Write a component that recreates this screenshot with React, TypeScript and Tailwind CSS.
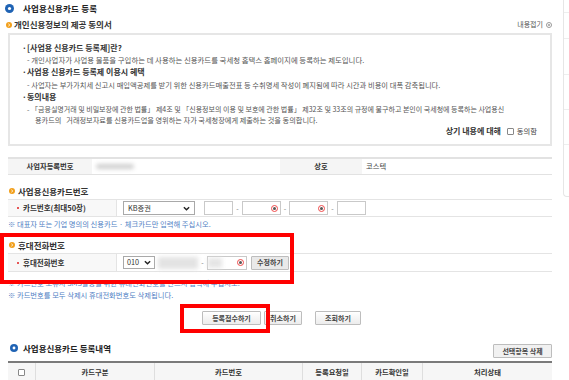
import React from 'react';

const BlueDot = ({ size = 9 }: { size?: number }) => (
  <svg width={size} height={size} viewBox="0 0 10 10" className="shrink-0">
    <circle cx="5" cy="5" r="5" fill="#1f63b4" />
    <circle cx="5" cy="5" r="1.8" fill="#ffffff" />
  </svg>
);

const OrangeDot = () => (
  <svg width="6" height="6" viewBox="0 0 10 10" className="shrink-0">
    <circle cx="5" cy="5" r="5" fill="#f2a01c" />
    <path d="M4 3 L6.2 5 L4 7" stroke="#fff" strokeWidth="1.6" fill="none" />
  </svg>
);

const Chevron = () => (
  <svg width="7" height="5" viewBox="0 0 8 5" className="shrink-0">
    <path d="M1 1 L4 4 L7 1" stroke="#222" strokeWidth="1.6" fill="none" />
  </svg>
);

const KeyIcon = () => (
  <span className="w-[7px] h-[7px] rounded-full border border-[#f04a4a] flex items-center justify-center shrink-0">
    <span className="w-[3px] h-[3px] rounded-full bg-[#555]" />
  </span>
);

const Input = ({ w, icon }: { w: string; icon?: boolean }) => (
  <div className={`${w} h-[14px] border border-[#c9c9c9] bg-white flex items-center justify-end pr-[2px]`}>
    {icon && <KeyIcon />}
  </div>
);

const Dash = ({ w }: { w: string }) => (
  <span className={`${w} text-center text-[7px] text-[#777]`}>-</span>
);

const SectionHead = ({ children }: { children: React.ReactNode }) => (
  <div className="h-[16px] flex items-center gap-[3px] pl-[1px]">
    <OrangeDot />
    <span className="text-[8.5px] font-bold text-[#333]">{children}</span>
  </div>
);

const Label = ({ children }: { children: React.ReactNode }) => (
  <div className="w-[109px] h-full bg-[#f8f8f8] border-r border-[#e4e4e4] flex items-center pl-[9px] gap-[4px]">
    <span className="w-[2px] h-[2px] bg-[#e02020] rounded-full" />
    <span className="text-[7.5px] font-bold text-[#333]">{children}</span>
  </div>
);

const Btn = ({ children, className }: { children: React.ReactNode; className: string }) => (
  <button className={`h-[14px] border border-[#bdbdbd] rounded-[1px] bg-gradient-to-b from-white to-[#ececec] text-[7px] font-bold text-[#444] flex items-center justify-center ${className}`}>
    {children}
  </button>
);

const App: React.FC = () => {
  return (
    <div className="w-[569px] h-[380px] overflow-hidden bg-white relative flex font-['Noto_Sans_CJK_KR',sans-serif] text-[#333]">
      <main className="w-[563px] shrink-0 pl-[5px] pr-[11px]">
        {/* Title */}
        <div className="h-[16px] flex items-center gap-[9px]">
          <BlueDot />
          <h1 className="text-[8.5px] font-bold tracking-[0.2px] text-[#222]">사업용신용카드 등록</h1>
        </div>

        {/* Consent heading */}
        <div className="h-[17px] flex items-center gap-[2px] pl-[1px]">
          <OrangeDot />
          <span className="text-[8.5px] font-bold text-[#333]">개인신용정보의 제공 동의서</span>
          <span className="ml-auto flex items-center gap-[3px] text-[7px] text-[#555]">
            내용접기
            <span className="w-[6px] h-[6px] rounded-full border border-[#999] flex items-center justify-center">
              <span className="w-[2px] h-[2px] bg-[#999] rounded-full" />
            </span>
          </span>
        </div>

        {/* Consent box */}
        <div className="ml-[3px] border-2 border-[#e6e6e6] pt-[7px] pb-[7px] whitespace-nowrap overflow-hidden">
          <div className="h-[12px] flex items-center pl-[12px] text-[8px] font-bold text-[#333]">
            <span className="w-[5px]">·</span>[사업용 신용카드 등록제]란?
          </div>
          <div className="h-[12px] flex items-center pl-[17px] text-[7.4px] text-[#555]">
            - 개인사업자가 사업용 물품을 구입하는 데 사용하는 신용카드를 국세청 홈택스 홈페이지에 등록하는 제도입니다.
          </div>
          <div className="h-[12px] flex items-center pl-[12px] text-[8px] font-bold text-[#333]">
            <span className="w-[5px]">·</span>사업용 신용카드 등록제 이용시 혜택
          </div>
          <div className="h-[12px] mt-[1px] flex items-center pl-[17px] text-[7.3px] text-[#555]">
            - 사업자는 부가가치세 신고시 매입액공제를 받기 위한 신용카드매출전표 등 수취명세 작성이 폐지됨에 따라 시간과 비용이 대폭 감축됩니다.
          </div>
          <div className="h-[12px] flex items-center pl-[12px] text-[8px] font-bold text-[#333]">
            <span className="w-[5px]">·</span>동의내용
          </div>
          <div className="h-[12px] flex items-center pl-[17px] text-[7px] text-[#555]">
            - 「금융실명거래 및 비밀보장에 관한 법률」 제4조 및 「신용정보의 이용 및 보호에 관한 법률」 제32조 및 33조의 규정에 불구하고 본인이 국세청에 등록하는 사업용신
          </div>
          <div className="h-[10px] flex items-center pl-[25px] text-[7.2px] text-[#555] whitespace-pre">
            용카드의   거래정보자료를 신용카드업을 영위하는 자가 국세청장에게 제출하는 것을 동의합니다.
          </div>
          <div className="h-[12px] flex items-center justify-end pr-[13px]">
            <span className="text-[8px] font-bold text-[#333]">상기 내용에 대해</span>
            <span className="ml-[6px] w-[7px] h-[7px] border border-[#888] rounded-[1px] bg-white" />
            <span className="ml-[3px] text-[7.3px] text-[#444]">동의함</span>
          </div>
        </div>

        <div className="ml-[3px]">
          {/* Business info row */}
          <div className="mt-[11px] h-[18px] flex border-t-2 border-b border-[#e2e2e2] text-[7.3px]">
            <div className="w-[84px] bg-[#f5f5f5] flex items-center justify-center font-bold text-[#333]">사업자등록번호</div>
            <div className="w-[188px] flex items-center pl-[4px]">
              <span className="w-[38px] h-[5px] bg-[#cfcfcf] blur-[2px] rounded-full" />
            </div>
            <div className="w-[82px] bg-[#f5f5f5] flex items-center justify-center font-bold text-[#333]">상호</div>
            <div className="flex-1 flex items-center pl-[4px] text-[#444]">코스텍</div>
          </div>

          {/* Card number */}
          <div className="mt-[8px]">
            <SectionHead>사업용신용카드번호</SectionHead>
          </div>
          <div className="h-[18px] flex border-t border-b border-[#e4e4e4]">
            <Label>카드번호(최대50장)</Label>
            <div className="flex items-center pl-[6px]">
              <div className="w-[72px] h-[14px] border border-[#a9a9a9] bg-white flex items-center justify-between px-[4px] text-[7.3px] text-[#333]">
                KB증권
                <Chevron />
              </div>
              <div className="ml-[9px]"><Input w="w-[29px]" /></div>
              <Dash w="w-[9px]" />
              <Input w="w-[39px]" icon />
              <Dash w="w-[8px]" />
              <Input w="w-[39px]" icon />
              <Dash w="w-[9px]" />
              <Input w="w-[29px]" />
            </div>
          </div>
          <div className="h-[15px] flex items-center text-[7.3px] text-[#4f80c4]">
            ※ 대표자 또는 기업 명의의 신용카드 · 체크카드만 입력해 주십시오.
          </div>

          {/* Mobile */}
          <div className="mt-[5px]">
            <SectionHead>휴대전화번호</SectionHead>
          </div>
          <div className="h-[19px] flex border-t border-b border-[#e4e4e4]">
            <Label>휴대전화번호</Label>
            <div className="flex items-center pl-[6px]">
              <div className="w-[32px] h-[13px] border border-[#a9a9a9] bg-white flex items-center justify-between px-[3px] text-[7.3px] text-[#333]">
                010
                <Chevron />
              </div>
              <span className="ml-[3px] w-[40px] h-[12px] bg-[#e3e3e3] blur-[2px]" />
              <Dash w="w-[9px]" />
              <div className="w-[40px] h-[14px] border border-[#c9c9c9] bg-white flex items-center justify-between pr-[2px]">
                <span className="w-[14px] h-[10px] bg-[#e5e5e5] blur-[2px]" />
                <KeyIcon />
              </div>
              <Btn className="ml-[4px] w-[38px] bg-none bg-[#e9e9e9]">수정하기</Btn>
            </div>
          </div>
          <div className="mt-[5px] h-[12px] flex items-center text-[7.3px] text-[#4f80c4]">
            ※ 카드번호 오류시 SMS발송을 위한 휴대전화번호를 반드시 입력해 주십시오.
          </div>
          <div className="h-[12px] flex items-center text-[7.3px] text-[#4f80c4]">
            ※ 카드번호를 모두 삭제시 휴대전화번호도 삭제됩니다.
          </div>

          {/* Action buttons */}
          <div className="mt-[10px] flex pl-[194px]">
            <Btn className="w-[59px]">등록접수하기</Btn>
            <Btn className="ml-[3px] w-[38px]">취소하기</Btn>
            <Btn className="ml-[13px] w-[46px]">조회하기</Btn>
          </div>

          {/* List */}
          <div className="mt-[15px] h-[18px] flex items-end justify-between">
            <div className="h-[16px] self-start flex items-center gap-[5px] pl-[2px]">
              <BlueDot size={8} />
              <span className="text-[8.5px] font-bold text-[#222]">사업용신용카드 등록내역</span>
            </div>
            <Btn className="w-[59px] h-[13px] bg-none bg-[#f1f1f1]">선택항목 삭제</Btn>
          </div>
          <div className="mt-[3px] h-[20px] flex border-t-2 border-[#7a7a7a] bg-[#f6f6f6] text-[7.3px] font-bold text-[#333]">
            <div className="w-[28px] border-r border-[#dedede] flex items-center justify-center">
              <span className="w-[7px] h-[7px] border border-[#888] rounded-[1px] bg-white" />
            </div>
            <div className="w-[119px] border-r border-[#dedede] flex items-center justify-center">카드구분</div>
            <div className="w-[148px] border-r border-[#dedede] flex items-center justify-center">카드번호</div>
            <div className="w-[59px] border-r border-[#dedede] flex items-center justify-center">등록요청일</div>
            <div className="w-[61px] border-r border-[#dedede] flex items-center justify-center">카드확인일</div>
            <div className="flex-1 flex items-center justify-center">처리상태</div>
          </div>
        </div>
      </main>

      {/* Right side panel edge */}
      <aside className="flex-1 h-[197px] border-l border-b border-[#e6e6e6] rounded-bl-[4px] flex flex-col">
        <div className="h-[13px] border-b border-[#eeeeee]" />
        <div className="h-[26px] border-b border-[#eeeeee]" />
        <div className="h-[36px] border-b border-[#eeeeee]" />
        <div className="h-[35px] border-b border-[#eeeeee]" />
        <div className="h-[35px] border-b border-[#eeeeee]" />
      </aside>

      {/* Annotation highlights */}
      <div className="absolute left-0 top-[233px] w-[294px] h-[51px] border-4 border-[#ff0000] pointer-events-none" />
      <div className="absolute left-[180px] top-[304px] w-[90px] h-[29px] border-4 border-[#ff0000] pointer-events-none" />
    </div>
  );
};

export default App;
